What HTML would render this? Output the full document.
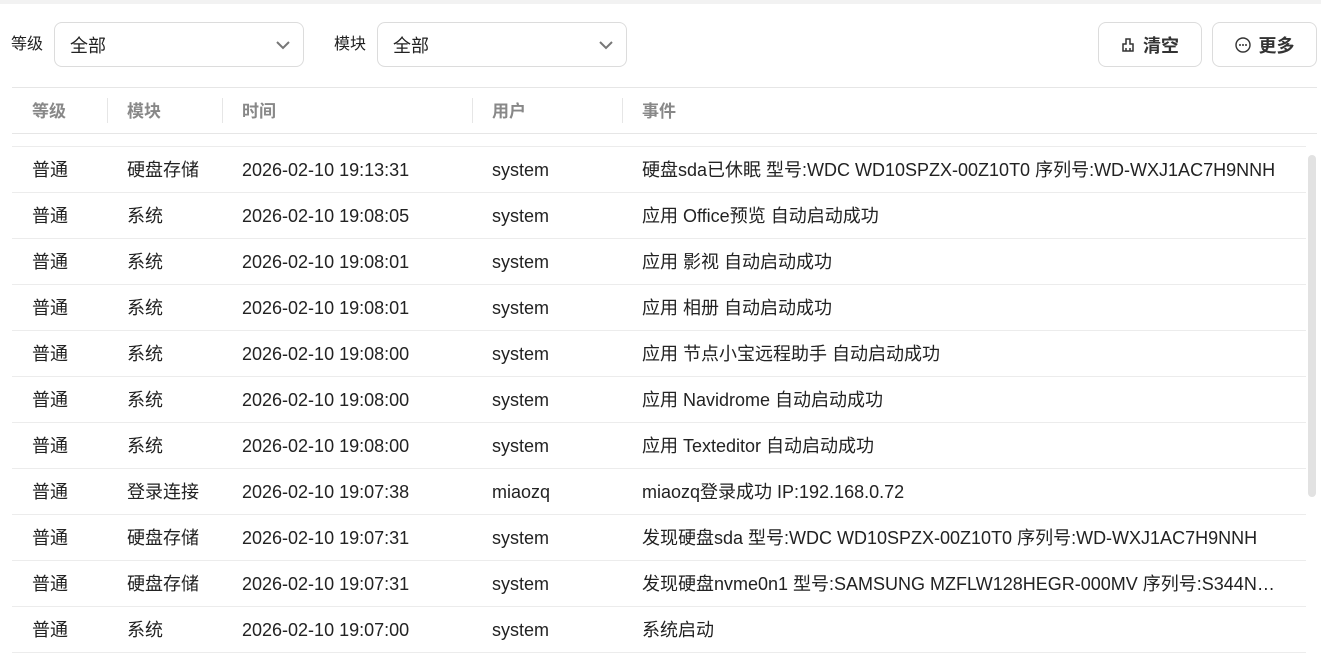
<!DOCTYPE html>
<html><head><meta charset="utf-8"><style>
*{box-sizing:border-box;margin:0;padding:0}
body{width:1321px;height:645px;overflow:hidden;background:#fff;font-family:"Liberation Sans","Noto Sans CJK SC",sans-serif;color:#222;position:relative}
.top{position:absolute;left:0;top:0;width:1321px;height:4px;background:#f2f2f2}
.lbl{position:absolute;top:35px;font-size:16px;line-height:20px;color:#222}
.sel{position:absolute;top:22px;height:45px;width:250px;border:1px solid #dcdcdc;border-radius:8px;font-size:18px;line-height:22px;padding:12px 0 0 15px}
.sel svg{position:absolute;right:12px;top:17px}
.btn{position:absolute;top:22px;height:45px;border:1px solid #dcdcdc;border-radius:8px;font-size:18px;font-weight:bold;color:#333;display:flex;align-items:center;justify-content:center;gap:8px}
.hl{position:absolute;left:12px;width:1305px;height:1px;background:#e6e6e6}
.th{position:absolute;top:101px;font-size:17px;line-height:22px;font-weight:bold;color:#888}
.dv{position:absolute;top:98px;width:1px;height:25px;background:#e6e6e6}
.row{position:absolute;left:12px;width:1294px;height:46px;border-bottom:1px solid #ececec;font-size:18px}
.row span{position:absolute;top:12px;line-height:22px;height:22px;white-space:nowrap}
.sb{position:absolute;left:1308px;top:155px;width:8px;height:342px;border-radius:4px;background:#e2e2e2}
</style></head><body>
<div class="top"></div>
<div class="lbl" style="left:11px">等级</div>
<div class="sel" style="left:54px">全部<svg width="16" height="10" viewBox="0 0 16 10"><path d="M2 2l6 6 6-6" fill="none" stroke="#777" stroke-width="2"/></svg></div>
<div class="lbl" style="left:334px">模块</div>
<div class="sel" style="left:377px">全部<svg width="16" height="10" viewBox="0 0 16 10"><path d="M2 2l6 6 6-6" fill="none" stroke="#777" stroke-width="2"/></svg></div>
<div class="btn" style="left:1098px;width:104px"><svg width="14" height="16" viewBox="0 0 14 16"><path d="M5 2h4v5h3v7H2V7h3z M5 14v-3M9 14v-3" fill="none" stroke="#333" stroke-width="1.5"/></svg>清空</div>
<div class="btn" style="left:1212px;width:105px"><svg width="16" height="16" viewBox="0 0 16 16"><circle cx="8" cy="8" r="7" fill="none" stroke="#333" stroke-width="1.4"/><circle cx="5" cy="8" r="1" fill="#333"/><circle cx="8" cy="8" r="1" fill="#333"/><circle cx="11" cy="8" r="1" fill="#333"/></svg>更多</div>
<div class="hl" style="top:87px"></div>
<div class="th" style="left:32px">等级</div><div class="dv" style="left:107px"></div>
<div class="th" style="left:127px">模块</div><div class="dv" style="left:222px"></div>
<div class="th" style="left:242px">时间</div><div class="dv" style="left:472px"></div>
<div class="th" style="left:492px">用户</div><div class="dv" style="left:622px"></div>
<div class="th" style="left:642px">事件</div>
<div class="hl" style="top:133px"></div>
<div class="hl" style="top:146px;width:1294px;background:#ececec"></div>
<div class="row" style="top:147px"><span style="left:20px">普通</span><span style="left:115px">硬盘存储</span><span style="left:230px">2026-02-10 19:13:31</span><span style="left:480px">system</span><span style="left:630px">硬盘sda已休眠 型号:WDC WD10SPZX-00Z10T0 序列号:WD-WXJ1AC7H9NNH</span></div>
<div class="row" style="top:193px"><span style="left:20px">普通</span><span style="left:115px">系统</span><span style="left:230px">2026-02-10 19:08:05</span><span style="left:480px">system</span><span style="left:630px">应用 Office预览 自动启动成功</span></div>
<div class="row" style="top:239px"><span style="left:20px">普通</span><span style="left:115px">系统</span><span style="left:230px">2026-02-10 19:08:01</span><span style="left:480px">system</span><span style="left:630px">应用 影视 自动启动成功</span></div>
<div class="row" style="top:285px"><span style="left:20px">普通</span><span style="left:115px">系统</span><span style="left:230px">2026-02-10 19:08:01</span><span style="left:480px">system</span><span style="left:630px">应用 相册 自动启动成功</span></div>
<div class="row" style="top:331px"><span style="left:20px">普通</span><span style="left:115px">系统</span><span style="left:230px">2026-02-10 19:08:00</span><span style="left:480px">system</span><span style="left:630px">应用 节点小宝远程助手 自动启动成功</span></div>
<div class="row" style="top:377px"><span style="left:20px">普通</span><span style="left:115px">系统</span><span style="left:230px">2026-02-10 19:08:00</span><span style="left:480px">system</span><span style="left:630px">应用 Navidrome 自动启动成功</span></div>
<div class="row" style="top:423px"><span style="left:20px">普通</span><span style="left:115px">系统</span><span style="left:230px">2026-02-10 19:08:00</span><span style="left:480px">system</span><span style="left:630px">应用 Texteditor 自动启动成功</span></div>
<div class="row" style="top:469px"><span style="left:20px">普通</span><span style="left:115px">登录连接</span><span style="left:230px">2026-02-10 19:07:38</span><span style="left:480px">miaozq</span><span style="left:630px">miaozq登录成功 IP:192.168.0.72</span></div>
<div class="row" style="top:515px"><span style="left:20px">普通</span><span style="left:115px">硬盘存储</span><span style="left:230px">2026-02-10 19:07:31</span><span style="left:480px">system</span><span style="left:630px">发现硬盘sda 型号:WDC WD10SPZX-00Z10T0 序列号:WD-WXJ1AC7H9NNH</span></div>
<div class="row" style="top:561px"><span style="left:20px">普通</span><span style="left:115px">硬盘存储</span><span style="left:230px">2026-02-10 19:07:31</span><span style="left:480px">system</span><span style="left:630px;width:642px;overflow:hidden;text-overflow:ellipsis">发现硬盘nvme0n1 型号:SAMSUNG MZFLW128HEGR-000MV 序列号:S344NX0K123456</span></div>
<div class="row" style="top:607px"><span style="left:20px">普通</span><span style="left:115px">系统</span><span style="left:230px">2026-02-10 19:07:00</span><span style="left:480px">system</span><span style="left:630px">系统启动</span></div>
<div class="sb"></div>
</body></html>
